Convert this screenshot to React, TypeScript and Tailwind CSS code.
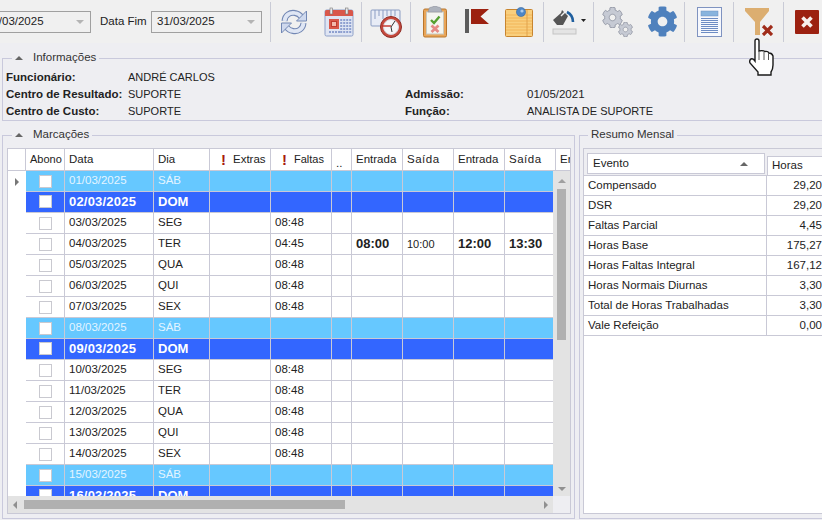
import type { ReactNode } from "react";
import { FaCog } from "react-icons/fa";

type Row = {
  date: string;
  day: string;
  kind?: "sat" | "sun";
  faltas?: string;
  times?: boolean;
};

const rows: Row[] = [
  { date: "01/03/2025", day: "SÁB", kind: "sat" },
  { date: "02/03/2025", day: "DOM", kind: "sun" },
  { date: "03/03/2025", day: "SEG", faltas: "08:48" },
  { date: "04/03/2025", day: "TER", faltas: "04:45", times: true },
  { date: "05/03/2025", day: "QUA", faltas: "08:48" },
  { date: "06/03/2025", day: "QUI", faltas: "08:48" },
  { date: "07/03/2025", day: "SEX", faltas: "08:48" },
  { date: "08/03/2025", day: "SÁB", kind: "sat" },
  { date: "09/03/2025", day: "DOM", kind: "sun" },
  { date: "10/03/2025", day: "SEG", faltas: "08:48" },
  { date: "11/03/2025", day: "TER", faltas: "08:48" },
  { date: "12/03/2025", day: "QUA", faltas: "08:48" },
  { date: "13/03/2025", day: "QUI", faltas: "08:48" },
  { date: "14/03/2025", day: "SEX", faltas: "08:48" },
  { date: "15/03/2025", day: "SÁB", kind: "sat" },
  { date: "16/03/2025", day: "DOM", kind: "sun" },
];

const resumo = [
  ["Compensado", "29,20"],
  ["DSR", "29,20"],
  ["Faltas Parcial", "4,45"],
  ["Horas Base", "175,27"],
  ["Horas Faltas Integral", "167,12"],
  ["Horas Normais Diurnas", "3,30"],
  ["Total de Horas Trabalhadas", "3,30"],
  ["Vale Refeição", "0,00"],
];

const columns =
  "grid grid-cols-[18px_39px_89px_56px_61px_61px_20px_51px_51px_51px_51px_40px]";

const Separator = () => <div className="h-[40px] w-px shrink-0 bg-[#c9cbd6]" />;

const Tool = ({ width, children }: { width: string; children: ReactNode }) => (
  <div className={`flex h-full shrink-0 items-center justify-center ${width}`}>
    {children}
  </div>
);

const DateBox = ({ value, className }: { value: string; className: string }) => (
  <div
    className={`flex h-[22px] shrink-0 items-center justify-between border border-[#a0a0a0] bg-[#f0f0f0] pl-[5px] pr-[6px] text-[#222] ${className}`}
  >
    <span>{value}</span>
    <span className="h-0 w-0 border-x-[4px] border-t-[4px] border-x-transparent border-t-[#b4b4b4]" />
  </div>
);

const RefreshIcon = () => (
  <svg width="28" height="28" viewBox="0 0 28 28">
    {[
      { stroke: "#7388b4", width: 6 },
      { stroke: "#dfe6f4", width: 3.8 },
    ].map((s) => (
      <g key={s.stroke} fill="none" stroke={s.stroke} strokeWidth={s.width}>
        <path d="M4.5 13 C5 7 10 4 15 5 C18 5.5 20 7 21.5 9" />
        <path d="M23.5 15 C23 21 18 24 13 23 C10 22.5 8 21 6.5 19" />
      </g>
    ))}
    <path d="M26.5 3 V13 H16.5 Z" fill="#cfd9ee" stroke="#7388b4" />
    <path d="M1.5 25 V15 H11.5 Z" fill="#cfd9ee" stroke="#7388b4" />
  </svg>
);

const CalendarIcon = () => (
  <svg width="30" height="30" viewBox="0 0 30 30">
    <rect x="1" y="3" width="28" height="26" rx="1.5" fill="#dfe5f3" stroke="#8ea0c8" />
    <path d="M1 9 V4.5 Q1 3 2.5 3 H27.5 Q29 3 29 4.5 V9 Z" fill="#d9574a" />
    <rect x="6" y="1" width="2.5" height="6" fill="#e8e8e8" stroke="#777" strokeWidth="0.6" />
    <rect x="21.5" y="1" width="2.5" height="6" fill="#e8e8e8" stroke="#777" strokeWidth="0.6" />
    <rect x="5" y="12" width="10" height="10" fill="#d9574a" />
    <rect x="7.5" y="14.5" width="5" height="5" fill="#f2b8ad" stroke="#c03a30" />
    {[17, 20, 23, 26].flatMap((x) =>
      [12, 15, 18, 21, 24].map((y) => (
        <rect key={`${x}-${y}`} x={x - 0.8} y={y} width="2" height="2" fill="#8ea0d0" />
      )),
    )}
    {[5, 8, 11, 14].map((x) => (
      <rect key={x} x={x} y="24" width="2" height="2" fill="#8ea0d0" />
    ))}
  </svg>
);

const RulerClockIcon = () => (
  <svg width="32" height="32" viewBox="0 0 32 32">
    <rect x="1" y="4" width="29" height="16" rx="1" fill="#e8ecf6" stroke="#8b9dc3" />
    {[5, 9, 13, 17, 21, 25].map((x) => (
      <path key={x} d={`M${x} 4 V${x % 8 === 5 ? 13 : 10}`} stroke="#8b9dc3" />
    ))}
    <circle cx="21" cy="21" r="10.5" fill="#c64a3e" stroke="#8f2d25" />
    <circle cx="21" cy="21" r="7.5" fill="#f6f6f8" stroke="#d8d8e0" />
    <path d="M21 21 L25 15 M21 21 L22 26" stroke="#333" strokeWidth="1" />
    <path d="M12 20 H21" stroke="#c03028" strokeWidth="1.4" />
  </svg>
);

const ClipboardIcon = () => (
  <svg width="24" height="32" viewBox="0 0 24 32">
    <rect x="0.5" y="3" width="23" height="28" rx="1.5" fill="#e9a558" stroke="#b8762d" />
    <rect x="3.5" y="6" width="17" height="22" fill="#f4f5f0" stroke="#c9c9c0" />
    <path d="M6 3 Q6 1 9 1 Q12 -1 15 1 Q18 1 18 3 L19 6 H5 Z" fill="#aeb3bd" stroke="#888d98" strokeWidth="0.5" />
    <path d="M8 14 L11 17 L16.5 10.5" fill="none" stroke="#55a030" strokeWidth="2.4" />
    <path d="M8.5 19.5 L15.5 26 M15.5 19.5 L8.5 26" stroke="#e58a86" strokeWidth="2.8" />
  </svg>
);

const FlagIcon = () => (
  <svg width="25" height="25" viewBox="0 0 25 25">
    <rect x="0" y="0" width="4" height="24" fill="#5c5c5c" />
    <path d="M6 0 H24 L15.5 7.5 L24 15 H6 Z" fill="#9c2110" />
  </svg>
);

const NoteIcon = () => (
  <svg width="29" height="30" viewBox="0 0 29 30">
    <rect x="0.5" y="2.5" width="27" height="27" rx="1" fill="#f9cf7d" stroke="#c8852f" />
    {[8, 11, 14, 17, 20, 23, 26].map((y) => (
      <path key={y} d={`M1 ${y} H27`} stroke="#f2b558" />
    ))}
    <path d="M22 3 V29" stroke="#e2a34c" />
    <circle cx="16" cy="5" r="4.6" fill="#4d86c6" stroke="#2f5f98" strokeWidth="0.5" />
    <circle cx="17" cy="4" r="1.6" fill="#a9cbee" />
  </svg>
);

const BucketIcon = () => (
  <svg width="34" height="28" viewBox="0 0 34 28">
    <path d="M1 12 L9 5 L10 2 L13 5 L16 8 L11 17 H5 Z" fill="#555" />
    <path d="M9 8 L14 3" stroke="#f0f0f0" strokeWidth="1.5" />
    <path d="M15 4 Q21 7 21 14" fill="none" stroke="#1f5f9e" strokeWidth="2.6" />
    <rect x="1" y="21" width="23" height="5" fill="#e4e4e4" stroke="#c4c4c4" />
    <path d="M29 11 H34 L31.5 14 Z" fill="#222" />
  </svg>
);

const GearsIcon = () => (
  <div className="relative h-[30px] w-[31px]">
    <FaCog size={21} stroke="#858b99" strokeWidth={18} className="absolute left-0 top-0 text-[#c6cad4]" />
    <FaCog size={15} stroke="#858b99" strokeWidth={22} className="absolute bottom-0 right-0 text-[#c6cad4]" />
  </div>
);

const DocIcon = () => (
  <svg width="25" height="30" viewBox="0 0 25 30">
    <rect x="0.5" y="0.5" width="24" height="29" fill="#f6f8fd" stroke="#7f93c0" />
    <rect x="4" y="4" width="17" height="5" fill="#88b4de" stroke="#6d8fc0" strokeWidth="0.5" />
    {[11, 13, 15, 17, 19, 21, 23, 25].map((y) => (
      <path key={y} d={`M4 ${y + 0.5} H21`} stroke="#6d8cc4" />
    ))}
  </svg>
);

const FilterClearIcon = () => (
  <svg width="28" height="28" viewBox="0 0 28 28">
    <path d="M0 0 H24 V3 L15 14 V27 L10 27 V14 L0 3 Z" fill="#dcae70" />
    <path d="M18 18 L27 27 M27 18 L18 27" stroke="#a02c1a" strokeWidth="3.2" />
  </svg>
);

const CloseIcon = () => (
  <svg width="24" height="24" viewBox="0 0 24 24">
    <rect width="24" height="24" rx="1" fill="#9c2110" />
    <path d="M7.5 7.5 L16.5 16.5 M16.5 7.5 L7.5 16.5" stroke="#f7f0ec" strokeWidth="3.6" />
  </svg>
);

const HandCursor = () => (
  <svg width="28" height="40" viewBox="0 0 28 40" className="absolute left-[748px] top-[38px]">
    <path
      d="M7 3 Q7 1 9 1 Q11 1 11 3 V13 Q15 12 17 13.5 Q20 13 21 15 Q24 15 25 18 V27 Q25 31 23 34 V37 H10 V34 L2 25 Q1 22 3 21 Q5 20 7 23 Z"
      fill="#fff"
      stroke="#1a1a1a"
      strokeWidth="1.4"
    />
    <path d="M11 14 V22 M16 14 V22 M20.5 15 V22" stroke="#555" strokeWidth="1" />
  </svg>
);

const Group = ({
  title,
  collapse,
  className,
  children,
}: {
  title: string;
  collapse?: boolean;
  className: string;
  children: ReactNode;
}) => (
  <fieldset className={`min-w-0 shrink-0 border border-[#c9c9dc] ${className}`}>
    <legend className={`flex h-[14px] items-center gap-[8px] px-[3px] text-[#333] ${collapse ? "ml-[9px]" : "ml-[8px]"}`}>
      {collapse && (
        <span className="h-0 w-0 border-x-[4px] border-b-[4px] border-x-transparent border-b-[#666]" />
      )}
      <span className={collapse ? "ml-[2px]" : ""}>{title}</span>
    </legend>
    {children}
  </fieldset>
);

const Cell = ({ children, className = "" }: { children?: ReactNode; className?: string }) => (
  <div className={`flex min-w-0 items-center whitespace-nowrap border-r border-b border-[#c9c9d6] pl-[4px] ${className}`}>
    {children}
  </div>
);

const Bang = () => <span className="mr-[7px] ml-[7px] text-[15px] font-bold text-[#a81c0c]">!</span>;

const Header = () => (
  <div className={`${columns} h-[22px] w-[603px] shrink-0 bg-white text-[#222]`}>
    <div className="border-r border-b border-[#c9c9d6]" />
    <Cell className="text-[11px]">Abono</Cell>
    <Cell>Data</Cell>
    <Cell>Dia</Cell>
    <Cell><Bang />Extras</Cell>
    <Cell><Bang /><span className="text-[11px]">Faltas</span></Cell>
    <Cell className="items-end pb-[3px] leading-[8px]">..</Cell>
    <Cell>Entrada</Cell>
    <Cell className="tracking-[0.5px]">Saída</Cell>
    <Cell>Entrada</Cell>
    <Cell className="tracking-[0.5px]">Saída</Cell>
    <Cell>En</Cell>
  </div>
);

const GridRow = ({ row }: { row: Row }) => {
  const bg =
    row.kind === "sat"
      ? "bg-[#66c8ff] text-[#e4f5ff]"
      : row.kind === "sun"
        ? "bg-[#3366ff] pb-[1px] font-bold text-white text-[13px]"
        : "bg-white text-[#222]";
  const line = row.kind ? "border-[#c8dcf2]" : "";
  const bold = row.times ? "pb-[2px] text-[13px] font-bold" : "";
  return (
    <div className={`${columns} h-[21px] w-[603px] shrink-0`}>
      <div className="flex items-center justify-center bg-white">
        {row.date === "01/03/2025" && (
          <span className="h-0 w-0 border-y-[4px] border-l-[4px] border-y-transparent border-l-[#777]" />
        )}
      </div>
      <div className={`flex items-center justify-center border-r border-b border-[#c9c9d6] ${bg} ${line}`}>
        <span className="h-[13px] w-[13px] border border-[#c9c9d0] bg-white" />
      </div>
      <Cell className={`${bg} ${line} ${row.kind === "sun" ? "tracking-[0.2px]" : ""}`}>{row.date}</Cell>
      <Cell className={`${bg} ${line}`}>{row.day}</Cell>
      <Cell className={`${bg} ${line}`} />
      <Cell className={`${bg} ${line}`}>{row.faltas}</Cell>
      <Cell className={`${bg} ${line}`} />
      <Cell className={`${bg} ${line} ${bold}`}>{row.times && "08:00"}</Cell>
      <Cell className={`${bg} ${line} text-[11px]`}>{row.times && "10:00"}</Cell>
      <Cell className={`${bg} ${line} ${bold}`}>{row.times && "12:00"}</Cell>
      <Cell className={`${bg} ${line} ${bold}`}>{row.times && "13:30"}</Cell>
      <Cell className={`${bg} ${line}`} />
    </div>
  );
};

const VerticalScrollbar = () => (
  <div className="flex w-[17px] shrink-0 flex-col items-center bg-[#e3e3e3]">
    <span className="mt-[8px] h-0 w-0 border-x-[4px] border-b-[4px] border-x-transparent border-b-[#a0a0a0]" />
    <div className="mt-[6px] h-[151px] w-[9px] bg-[#b0b0b0]" />
    <span className="mt-auto mb-[5px] h-0 w-0 border-x-[4px] border-t-[4px] border-x-transparent border-t-[#909090]" />
  </div>
);

const HorizontalScrollbar = () => (
  <div className="flex h-[17px] min-w-0 flex-1 items-center bg-[#e3e3e3]">
    <span className="ml-[5px] h-0 w-0 border-y-[4px] border-r-[4px] border-y-transparent border-r-[#909090]" />
    <div className="ml-[7px] h-[9px] w-[321px] bg-[#b0b0b0]" />
    <span className="mr-[5px] ml-auto h-0 w-0 border-y-[4px] border-l-[4px] border-y-transparent border-l-[#909090]" />
  </div>
);

export default function App() {
  return (
    <div className="relative h-[520px] w-[822px] overflow-hidden bg-[#eeeef2] font-['Liberation_Sans',sans-serif] text-[11.5px] leading-none">
      <div className="flex h-[43px] items-center bg-[#f0f0f0]">
        <DateBox value="01/03/2025" className="-ml-[20px] w-[111px]" />
        <span className="ml-[9px] w-[51px] text-[#222]">Data Fim</span>
        <DateBox value="31/03/2025" className="w-[111px]" />
        <div className="ml-[8px]" />
        <Separator />
        <Tool width="w-[46px]"><RefreshIcon /></Tool>
        <Tool width="w-[44px]"><CalendarIcon /></Tool>
        <Separator />
        <Tool width="w-[48px]"><RulerClockIcon /></Tool>
        <Separator />
        <Tool width="w-[48px]"><ClipboardIcon /></Tool>
        <Tool width="w-[36px]"><FlagIcon /></Tool>
        <Tool width="w-[48px]"><NoteIcon /></Tool>
        <Separator />
        <Tool width="w-[49px]"><BucketIcon /></Tool>
        <Separator />
        <Tool width="w-[46px]"><GearsIcon /></Tool>
        <Tool width="w-[44px]"><FaCog size={31} className="text-[#4f81bd]" /></Tool>
        <Separator />
        <Tool width="w-[48px]"><DocIcon /></Tool>
        <Separator />
        <Tool width="w-[49px]"><FilterClearIcon /></Tool>
        <Separator />
        <Tool width="w-[38px]"><div className="ml-[8px]"><CloseIcon /></div></Tool>
      </div>

      <div className="flex flex-col pl-[2px] pt-[8px]">
        <Group title="Informações" collapse className="h-[70px] w-[830px]">
          <div className="grid grid-cols-[122px_277px_122px_1fr] grid-rows-[17px_17px_17px] items-center pl-[3px] pt-[4px] text-[#222]">
            <b>Funcionário:</b>
            <span className="text-[11px]">ANDRÉ CARLOS</span>
            <span />
            <span />
            <b className="whitespace-nowrap">Centro de Resultado:</b>
            <span className="text-[11px]">SUPORTE</span>
            <b>Admissão:</b>
            <span>01/05/2021</span>
            <b>Centro de Custo:</b>
            <span className="text-[11px]">SUPORTE</span>
            <b>Função:</b>
            <span className="text-[11px]">ANALISTA DE SUPORTE</span>
          </div>
        </Group>

        <div className="mt-[7px] flex gap-[4px]">
          <Group title="Marcações" collapse className="h-[391px] w-[573px]">
            <div className="mt-[6px] ml-[4px] flex h-[366px] w-[564px] flex-col overflow-hidden border border-[#c9c9d6] bg-white">
              <div className="w-[562px] overflow-hidden">
                <Header />
              </div>
              <div className="flex min-h-0 flex-1">
                <div className="min-w-0 flex-1 overflow-hidden">
                  {rows.map((row) => (
                    <GridRow key={row.date} row={row} />
                  ))}
                </div>
                <VerticalScrollbar />
              </div>
              <div className="flex shrink-0">
                <HorizontalScrollbar />
                <div className="w-[17px] bg-[#eeeef2]" />
              </div>
            </div>
          </Group>

          <Group title="Resumo Mensal" className="h-[391px] w-[260px]">
            <div className="mt-[6px] ml-[3px] flex h-[366px] w-[260px] flex-col overflow-hidden border border-[#c9c9d6] bg-white text-[#222]">
              <div className="flex h-[27px] shrink-0 items-end border-b border-[#c9c9d6] bg-[#eeeef2] pl-[3px]">
                <div className="mb-[1px] flex h-[21px] w-[178px] shrink-0 items-center justify-between border border-[#c9c9d6] bg-white pl-[5px] pr-[16px]">
                  <span>Evento</span>
                  <span className="h-0 w-0 border-x-[4px] border-b-[4px] border-x-transparent border-b-[#666]" />
                </div>
                <div className="ml-[2px] flex h-[19px] w-[80px] shrink-0 items-center border-t border-l border-[#c9c9d6] bg-white pl-[4px]">
                  Horas
                </div>
              </div>
              {resumo.map(([name, hours]) => (
                <div key={name} className="grid h-[20px] shrink-0 grid-cols-[183px_55px] border-b border-[#c9c9d6]">
                  <div className="flex items-center border-r border-[#c9c9d6] pl-[4px] whitespace-nowrap">{name}</div>
                  <div className="flex items-center justify-end">{hours}</div>
                </div>
              ))}
            </div>
          </Group>
        </div>
      </div>

      <HandCursor />
    </div>
  );
}
